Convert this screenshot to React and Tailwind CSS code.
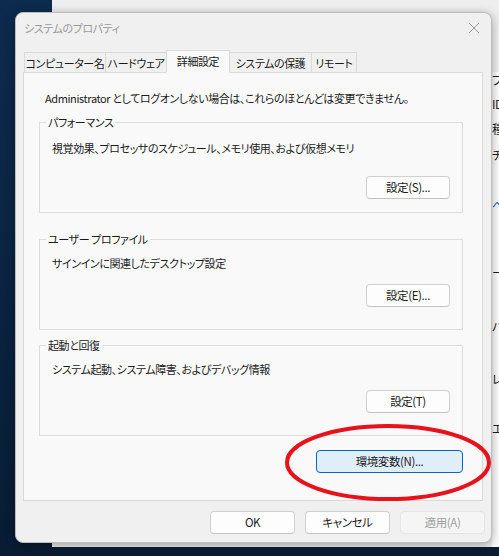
import React from "react";

const font = "font-['Noto_Sans_CJK_JP','Noto_Sans',sans-serif] [font-feature-settings:'palt'] tracking-[-0.4px]";

function Btn({ children, className = "", disabled = false, primary = false }) {
  const base = primary
    ? "bg-[#e0eef9] border-[#0067c0] text-[#1b1b1b]"
    : disabled
    ? "bg-[#f5f5f5] border-[#e5e5e5] text-[#a0a0a0]"
    : "bg-[#fdfdfd] border-[#d0d0d0] border-b-[#c2c2c2] text-[#1b1b1b]";
  return (
    <div
      className={`flex items-center justify-center h-[23px] rounded-[4px] border text-[11.5px] leading-none whitespace-nowrap ${base} ${className}`}
    >
      {children}
    </div>
  );
}

function Tab({ label, selected, w }) {
  return (
    <div
      className={`${w} flex items-center justify-center border border-[#d9d9d9] text-[11px] text-[#1b1b1b] whitespace-nowrap -mr-px ${
        selected ? "h-[23px] bg-[#f9f9f9] border-b-[#f9f9f9] z-10 relative" : "h-[21px] bg-[#f0f0f0] border-b-0"
      }`}
    >
      {label}
    </div>
  );
}

export default function App() {
  return (
    <div className={`relative w-[499px] h-[556px] overflow-hidden bg-gradient-to-b from-[#0d2b4e] to-[#081c34] ${font}`}>
      {/* window behind */}
      <div className="absolute left-[52px] top-0 right-0 h-[547px] bg-[#eeeeee] flex">
        <div className="w-[440px] shrink-0" />
        <div className="w-[7px] mt-[72px] bg-[#fbfbfb] flex flex-col text-[12px] leading-[16px] text-[#1b1b1b] whitespace-nowrap overflow-hidden">
          <div className="mt-[0px]">プ</div>
          <div className="mt-[8px]">ID</div>
          <div className="mt-[9px]">種</div>
          <div className="mt-[10px]">チ</div>
          <div className="mt-[34px] text-[#0067c0]">ベ</div>
          <div className="mt-[52px]">ー</div>
          <div className="mt-[38px]">ハ</div>
          <div className="mt-[36px]">レ</div>
          <div className="mt-[34px]">エ</div>
        </div>
      </div>

      {/* dialog */}
      <div className="absolute left-[15px] top-[12px] w-[477px] h-[531px] bg-[#f0f0f0] rounded-[8px] border border-[#bdbdbd] shadow-[0_2px_10px_rgba(0,0,0,0.35)] flex flex-col">
        {/* title bar */}
        <div className="h-[30px] flex items-center justify-between pl-[8px] pr-[8px]">
          <span className="text-[11px] text-[#9a9a9a] mt-[1px]">システムのプロパティ</span>
          <svg width="12" height="12" viewBox="0 0 12 12" className="mr-[3px]">
            <path d="M1 1 L11 11 M11 1 L1 11" stroke="#9a9a9a" strokeWidth="1" />
          </svg>
        </div>

        {/* tabs */}
        <div className="mt-[7px] pl-[8px] flex items-end h-[23px]">
          <Tab label="コンピューター名" w="w-[82px]" />
          <Tab label="ハードウェア" w="w-[62px]" />
          <Tab label="詳細設定" w="w-[64px]" selected />
          <Tab label="システムの保護" w="w-[83px]" />
          <Tab label="リモート" w="w-[46px]" />
        </div>

        {/* panel */}
        <div className="ml-[7px] w-[460px] h-[429px] -mt-px border border-[#d9d9d9] bg-[#f9f9f9] pt-[17px] pl-[15px] pr-[19px] flex flex-col text-[11px] text-[#1b1b1b]">
          <p className="leading-[16px] pl-[6px] whitespace-nowrap">
            Administrator としてログオンしない場合は、これらのほとんどは変更できません。
          </p>

          <fieldset className="mt-[8px] h-[99px] border border-[#dcdcdc] px-[12px] flex flex-col">
            <legend className="ml-[-6px] px-[2px] leading-[16px]">パフォーマンス</legend>
            <p className="mt-[10px] leading-[16px]">視覚効果、プロセッサのスケジュール、メモリ使用、および仮想メモリ</p>
            <div className="mt-[20px] flex justify-end">
              <Btn className="w-[84px]">設定(S)...</Btn>
            </div>
          </fieldset>

          <fieldset className="mt-[18px] h-[99px] border border-[#dcdcdc] px-[12px] flex flex-col">
            <legend className="ml-[-6px] px-[2px] leading-[16px]">ユーザー プロファイル</legend>
            <p className="mt-[8px] leading-[16px]">サインインに関連したデスクトップ設定</p>
            <div className="mt-[13px] flex justify-end">
              <Btn className="w-[84px]">設定(E)...</Btn>
            </div>
          </fieldset>

          <fieldset className="mt-[7px] h-[99px] border border-[#dcdcdc] px-[12px] flex flex-col">
            <legend className="ml-[-6px] px-[2px] leading-[16px]">起動と回復</legend>
            <p className="mt-[8px] leading-[16px]">システム起動、システム障害、およびデバッグ情報</p>
            <div className="mt-[13px] flex justify-end">
              <Btn className="w-[84px]">設定(T)</Btn>
            </div>
          </fieldset>

          <div className="mt-[14px] flex justify-end">
            <Btn primary className="w-[147px]">環境変数(N)...</Btn>
          </div>
        </div>

        {/* bottom buttons */}
        <div className="mt-[10px] flex justify-end pr-[6px] gap-[10px]">
          <Btn className="w-[85px]">OK</Btn>
          <Btn className="w-[85px]">キャンセル</Btn>
          <Btn disabled className="w-[85px]">適用(A)</Btn>
        </div>
      </div>

      {/* red annotation ellipse */}
      <svg className="absolute left-[285px] top-[424px]" width="206" height="77" viewBox="0 0 206 77">
        <ellipse cx="103" cy="38.5" rx="101" ry="36.5" fill="none" stroke="#e8121c" strokeWidth="4" />
      </svg>
    </div>
  );
}
